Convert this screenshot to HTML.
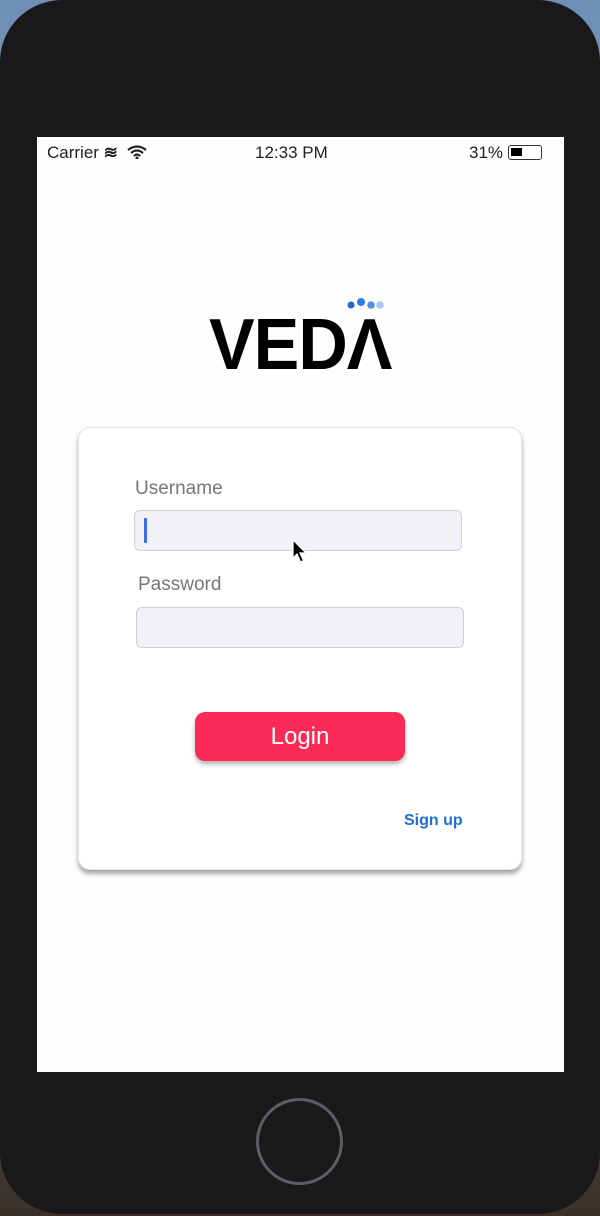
<!DOCTYPE html>
<html><head><meta charset="utf-8"><style>
*{margin:0;padding:0;box-sizing:border-box}
body{width:600px;height:1216px;overflow:hidden;background:linear-gradient(#6f8fb5,#8a9bb0 40%,#3a3028);font-family:"Liberation Sans",Arial,sans-serif;position:relative}
.phone{position:absolute;left:0;top:0;width:600px;height:1214px;background:#1a181b;border-radius:62px}
.screen{position:absolute;left:37px;top:137px;width:527px;height:935px;background:#fefdff}
.sb{position:absolute;top:6px;font-size:17px;color:#222}
.card{position:absolute;left:41px;top:290px;width:444px;height:443px;border:1px solid #e2e2e6;border-radius:12px;background:#fff;box-shadow:0 4px 5px rgba(0,0,0,.35)}
.lbl{position:absolute;font-size:19px;color:#777}
.inp{position:absolute;width:328px;height:41px;background:#f2f1f7;border:1px solid #cfcfd4;border-radius:6px}
.btn{position:absolute;left:116px;top:284px;width:210px;height:49px;background:#fb2a56;border-radius:10px;color:#fff;font-size:24px;text-align:center;line-height:49px;box-shadow:0 3px 5px rgba(0,0,0,.3)}
</style></head><body>
<div class="phone"></div>
<div class="screen">
 <div class="sb" style="left:10px">Carrier <span style="font-weight:bold">≋</span> &nbsp;<svg width="20" height="14" viewBox="0 0 20 14" style="vertical-align:-1px"><path d="M1 5Q10-2 19 5M4 8Q10 3 16 8M7 11Q10 8 13 11" stroke="#222" stroke-width="2.2" fill="none"/><circle cx="10" cy="13" r="1.5" fill="#222"/></svg></div>
 <div class="sb" style="left:218px">12:33 PM</div>
 <div class="sb" style="left:432px">31% <span style="display:inline-block;width:34px;height:15px;border:1.5px solid #333;border-radius:3px;vertical-align:-2px;position:relative"><span style="position:absolute;left:2px;top:2px;width:11px;height:8px;background:#000"></span></span></div>
 <svg style="position:absolute;left:305px;top:160px" width="50" height="14"><circle cx="9" cy="8" r="3.5" fill="#2b63d0"/><circle cx="19" cy="5" r="4" fill="#2f7be6"/><circle cx="29" cy="8" r="3.8" fill="#5a8fe0"/><circle cx="38" cy="8" r="3.8" fill="#a8c8f2"/></svg>
 <div style="position:absolute;left:172px;top:172px;font-size:72px;font-weight:900;color:#000;letter-spacing:-1px;transform:scaleX(0.95);transform-origin:left;line-height:72px">VEDΛ</div>
 <div class="card">
  <div class="lbl" style="left:56px;top:50px">Username</div>
  <div class="inp" style="left:55px;top:82px"><div style="position:absolute;left:9px;top:7px;width:3px;height:25px;background:#3a6fe0;border-radius:1px"></div></div>
  <div class="lbl" style="left:59px;top:146px">Password</div>
  <div class="inp" style="left:57px;top:179px"></div>
  <svg style="position:absolute;left:213px;top:111px" width="16" height="26" viewBox="0 0 16 26"><path d="M1 1L1 19L5 15L8.5 23L11.5 21.5L8 14L14 14Z" fill="#000" stroke="#fff" stroke-width="1.2"/></svg>
  <div class="btn">Login</div>
  <div style="position:absolute;left:325px;top:384px;font-size:16px;font-weight:bold;color:#1f6fcf">Sign up</div>
 </div>
</div>
<div style="position:absolute;left:256px;top:1098px;width:87px;height:87px;border:3px solid #5f5d61;border-radius:50%"></div>
</body></html>
